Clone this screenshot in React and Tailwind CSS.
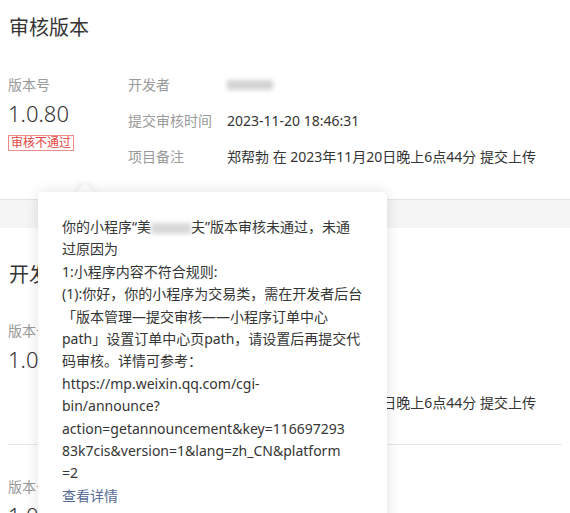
import React from "react";

const font = { fontFamily: '"Noto Sans", "Noto Sans CJK SC", sans-serif' };

const InfoRow = ({ label, children }) => (
  <div className="flex h-5 items-center text-sm leading-5">
    <span className="w-[99px] shrink-0 text-[#9a9a9a]">{label}</span>
    <span className="whitespace-nowrap text-[#353535]">{children}</span>
  </div>
);

const VersionItem = ({ version, badge, time }) => (
  <div className="flex">
    <div className="w-[120px] shrink-0">
      <div className="h-5 text-sm leading-5 text-[#9a9a9a]">版本号</div>
      <div className="mt-[2px] h-8 text-[22px] font-light leading-8 text-[#353535]">{version}</div>
      {badge && (
        <div className="mt-[6px] inline-block border border-[#f08a88] px-[2px] text-xs leading-[14px] text-[#e64340]">
          {badge}
        </div>
      )}
    </div>
    <div className="flex flex-col gap-4">
      <InfoRow label="开发者">
        <span className="inline-block h-[10px] w-[46px] bg-[#d4d4d4] blur-[2px]" />
      </InfoRow>
      <InfoRow label="提交审核时间">{time}</InfoRow>
      <InfoRow label="项目备注">郑帮勃 在 2023年11月20日晚上6点44分 提交上传</InfoRow>
    </div>
  </div>
);

// line breaks as they fall in the original popover
const lines = [
  "过原因为",
  "1:小程序内容不符合规则:",
  "(1):你好，你的小程序为交易类，需在开发者后台",
  "「版本管理—提交审核——小程序订单中心",
  "path」设置订单中心页path，请设置后再提交代",
  "码审核。详情可参考：",
  "https://mp.weixin.qq.com/cgi-",
  "bin/announce?",
  "action=getannouncement&key=116697293",
  "83k7cis&version=1&lang=zh_CN&platform",
  "=2",
];

const Popover = () => (
  <div className="absolute left-[38px] top-[192px] w-[349px]">
    <div className="absolute left-[41px] top-[-6px] h-3 w-3 rotate-45 bg-white shadow-[0_0_10px_rgba(0,0,0,0.12)]" />
    <div className="relative h-[340px] rounded-t bg-white px-6 pt-[24px] text-sm leading-[22.4px] text-[#353535] shadow-[0_0_14px_rgba(0,0,0,0.12)]">
      <div className="whitespace-nowrap">
        你的小程序“美
        <span className="inline-block h-[11px] w-[40px] bg-[#d8d8d8] align-middle blur-[2px]" />
        夫”版本审核未通过，未通
      </div>
      {lines.map((l) => (
        <div key={l} className="whitespace-nowrap">
          {l}
        </div>
      ))}
      <div className="text-[#576b95]">查看详情</div>
    </div>
  </div>
);

export default function App() {
  return (
    <div className="relative h-[513px] w-[570px] overflow-hidden bg-white" style={font}>
      <section className="px-2 pb-8 pt-[14px]">
        <h1 className="h-7 pl-[1px] text-xl font-normal leading-7 text-[#353535]">审核版本</h1>
        <div className="mt-[33px]">
          <VersionItem version="1.0.80" badge="审核不通过" time="2023-11-20 18:46:31" />
        </div>
      </section>
      <div className="h-[29px] border-t border-[#e4e4e4] bg-[#f5f5f6]" />
      <section className="px-2 pt-[33px]">
        <h2 className="h-7 pl-[1px] text-xl font-normal leading-7 text-[#353535]">开发版本</h2>
        <div className="mt-8 pb-[31px]">
          <VersionItem version="1.0.80" time="2023-11-20 18:46:31" />
        </div>
        <div className="border-t border-[#e6e6e6] pt-8">
          <VersionItem version="1.0.79" time="2023-11-18 10:12:05" />
        </div>
      </section>
      <Popover />
    </div>
  );
}
